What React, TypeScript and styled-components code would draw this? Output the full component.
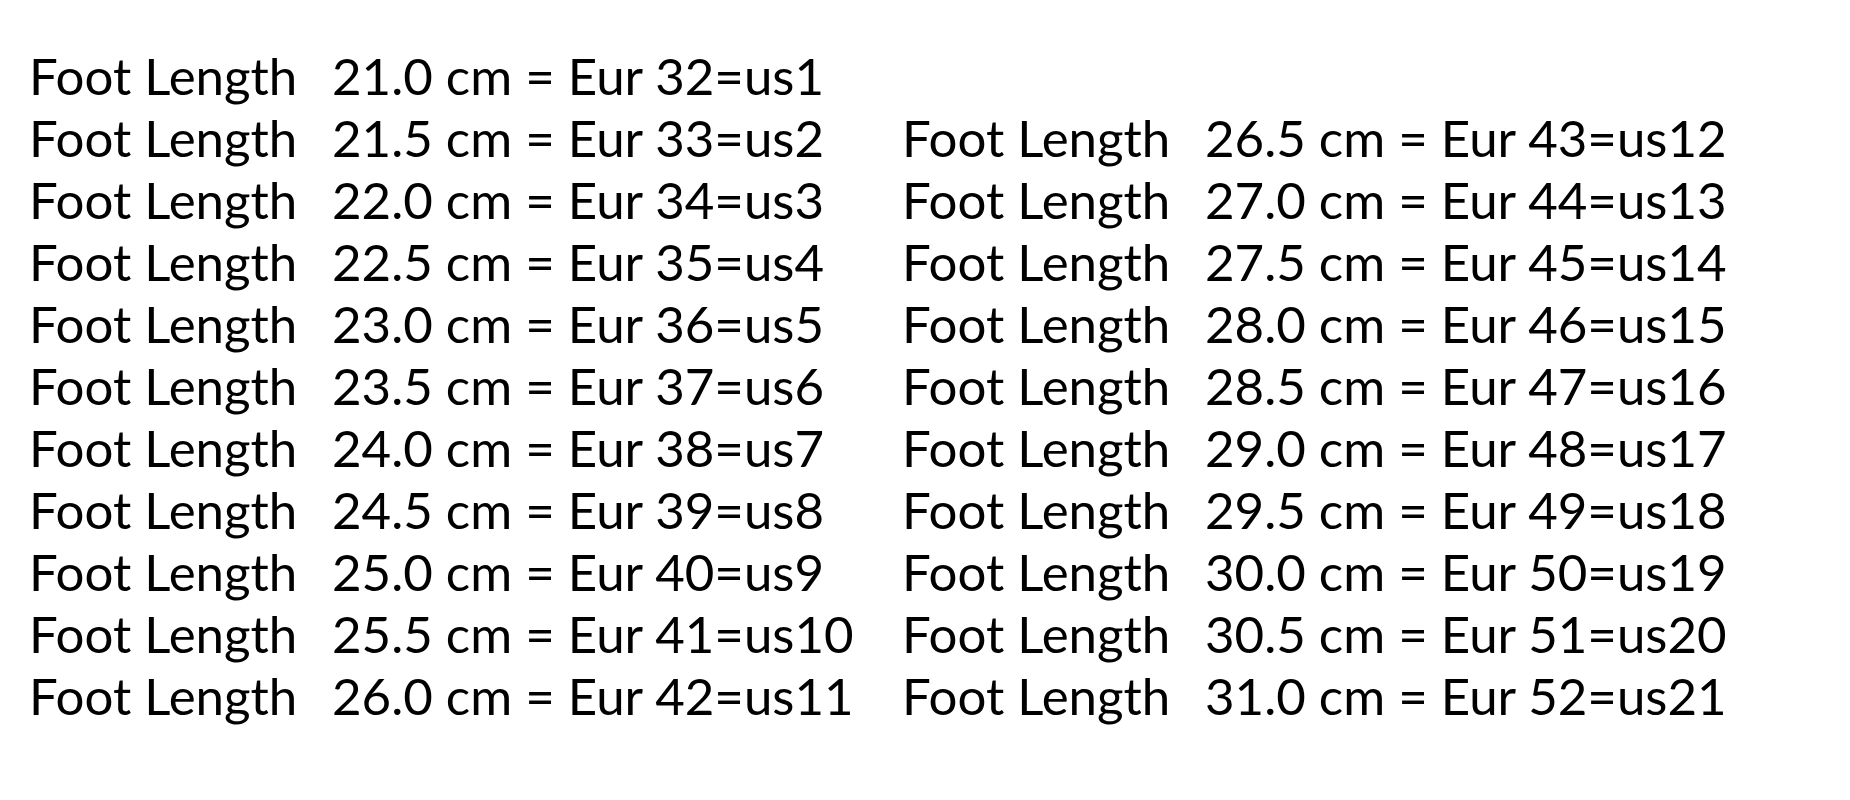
import React from 'react'
import styled, { createGlobalStyle } from 'styled-components'

const GlobalStyle = createGlobalStyle`
  html, body {
    margin: 0;
    padding: 0;
    background: #ffffff;
  }
`

const Page = styled.div`
  width: 1850px;
  height: 800px;
  box-sizing: border-box;
  padding: 45px 0 0 29px;
  background: #ffffff;
  font-family: Lato, 'Open Sans', sans-serif;
  font-size: 51px;
  line-height: 62px;
  color: #000000;
`

const Chart = styled.div`
  display: grid;
  grid-template-columns: 873px auto;
  grid-auto-rows: 62px;
`

const Entry = styled.div<{ $col: number; $row: number }>`
  grid-column: ${({ $col }) => $col};
  grid-row: ${({ $row }) => $row};
  display: flex;
  white-space: pre;
`

const Label = styled.span`
  width: 303px;
  flex-shrink: 0;
`

const Value = styled.span``

interface Size {
  cm: string
  eur: number
  us: number
}

const sizes: Size[] = Array.from({ length: 21 }, (_, i) => ({
  cm: (21 + i * 0.5).toFixed(1),
  eur: 32 + i,
  us: 1 + i,
}))

const App: React.FC = () => {
  return (
    <Page>
      <GlobalStyle />
      <Chart>
        {sizes.map((s, i) => {
          // first 11 go down the left column, the rest start on row 2 of the right
          const col = i < 11 ? 1 : 2
          const row = i < 11 ? i + 1 : i - 9
          return (
            <Entry key={s.cm} $col={col} $row={row}>
              <Label>Foot Length</Label>
              <Value>{`${s.cm} cm = Eur ${s.eur}=us${s.us}`}</Value>
            </Entry>
          )
        })}
      </Chart>
    </Page>
  )
}

export default App
